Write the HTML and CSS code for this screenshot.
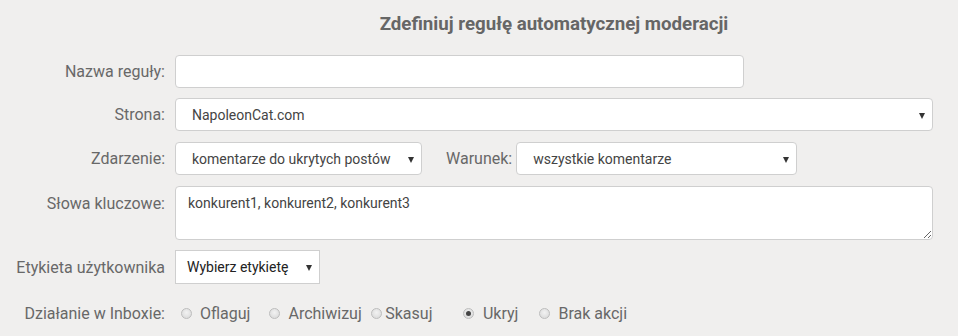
FILE: index.html
```html
<!DOCTYPE html>
<html lang="pl">
<head>
<meta charset="utf-8">
<title>Reguła moderacji</title>
<link rel="stylesheet" href="styles.css">
</head>
<body>
<div class="page">
  <h1 class="title">Zdefiniuj regułę automatycznej moderacji</h1>

  <div class="row row-name">
    <label class="lbl">Nazwa reguły:</label>
    <input class="ctl input-name" type="text">
  </div>

  <div class="row row-page">
    <label class="lbl">Strona:</label>
    <div class="sel sel-page"><span>NapoleonCat.com</span></div>
  </div>

  <div class="row row-event">
    <label class="lbl">Zdarzenie:</label>
    <div class="sel sel-event"><span>komentarze do ukrytych postów</span></div>
    <label class="lbl-inline">Warunek:</label>
    <div class="sel sel-cond"><span>wszystkie komentarze</span></div>
  </div>

  <div class="row row-keys">
    <label class="lbl lbl-top">Słowa kluczowe:</label>
    <textarea class="ctl keys">konkurent1, konkurent2, konkurent3</textarea>
  </div>

  <div class="row row-tag">
    <label class="lbl">Etykieta użytkownika</label>
    <div class="sel sel-tag"><span>Wybierz etykietę</span></div>
  </div>

  <div class="row row-action">
    <label class="lbl">Działanie w Inboxie:</label>
    <div class="radios">
      <span class="opt o1"><span class="radio"></span>Oflaguj</span>
      <span class="opt o2"><span class="radio"></span>Archiwizuj</span>
      <span class="opt o3"><span class="radio"></span>Skasuj</span>
      <span class="opt o4"><span class="radio checked"></span>Ukryj</span>
      <span class="opt o5"><span class="radio"></span>Brak akcji</span>
    </div>
  </div>
</div>
</body>
</html>
```

FILE: styles.css
```css
html, body {
  margin: 0;
  padding: 0;
  background: #f0efee;
}
body {
  font-family: Roboto, "Liberation Sans", Arial, sans-serif;
  color: #666;
  width: 958px;
  height: 336px;
  overflow: hidden;
}
.page {
  padding: 12px 25px 0 0;
}
.title {
  margin: 0 0 0 175px;
  font-size: 18.7px;
  line-height: 24px;
  font-weight: bold;
  color: #666;
  text-align: center;
}
.row {
  display: flex;
  align-items: center;
}
.lbl {
  width: 165px;
  flex: none;
  text-align: right;
  font-size: 16px;
  color: #686868;
  margin-right: 10px;
}
.lbl-top {
  align-self: flex-start;
  padding-top: 8px;
}
.row-name { margin-top: 19px; }
.row-page { margin-top: 10px; }
.row-event { margin-top: 11px; }
.row-keys { margin-top: 11px; }
.row-tag { margin-top: 10px; }
.row-action { margin-top: 20px; }

.ctl {
  box-sizing: border-box;
  border: 1px solid #cfcfcf;
  border-radius: 4px;
  background: #fff;
  font-family: Roboto, "Liberation Sans", Arial, sans-serif;
  font-size: 14px;
  color: #444;
  outline: none;
  margin: 0;
}
.input-name {
  width: 569px;
  height: 33px;
}
.keys {
  width: 759px;
  height: 54px;
  padding: 7px 12px;
  line-height: 18px;
  resize: both;
}
.sel {
  position: relative;
  box-sizing: border-box;
  height: 33px;
  border: 1px solid #cfcfcf;
  border-radius: 4px;
  background: #fff;
  font-size: 14px;
  color: #444;
  display: flex;
  align-items: center;
  padding-left: 16px;
}
.sel::after {
  content: "";
  position: absolute;
  right: 7px;
  top: 14px;
  border-left: 3.5px solid transparent;
  border-right: 3.5px solid transparent;
  border-top: 6px solid #333;
}
.sel-page { width: 759px; }
.sel-event { width: 247px; }
.sel-cond { width: 281px; }
.sel-tag {
  width: 145px;
  height: 34px;
  border-radius: 0;
  padding-left: 11px;
  color: #222;
}
.sel-tag::after { right: 7px; }
.lbl-inline {
  font-size: 16px;
  color: #686868;
  margin-left: 24px;
  margin-right: 4px;
}
.radios {
  display: flex;
  align-items: center;
  font-size: 16px;
  color: #686868;
  margin-left: 5.5px;
}
.opt {
  display: flex;
  align-items: center;
}
.radio {
  box-sizing: border-box;
  width: 11px;
  height: 11px;
  border-radius: 50%;
  border: 1px solid #bdbdbd;
  background: radial-gradient(circle at 50% 40%, #f2f2f2 0%, #d6d6d6 100%);
  margin-right: 8.5px;
  position: relative;
}
.radio.checked::after {
  content: "";
  position: absolute;
  left: 2px;
  top: 2px;
  width: 5px;
  height: 5px;
  border-radius: 50%;
  background: #444;
}
.o2 { margin-left: 18.5px; }
.o3 { margin-left: 9.5px; }
.o3 .radio { margin-right: 3px; }
.o4 { margin-left: 31px; }
.o5 { margin-left: 20.5px; }
```
